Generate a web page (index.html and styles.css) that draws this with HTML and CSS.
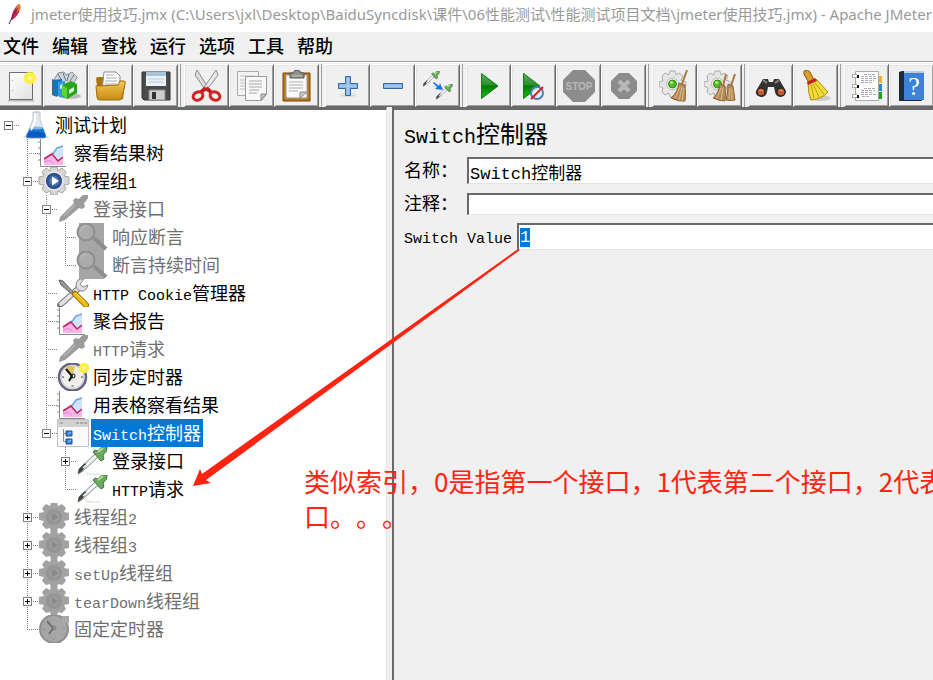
FILE: index.html
```html
<!DOCTYPE html>
<html lang="zh-CN">
<head>
  <meta charset="UTF-8">
  <meta name="viewport" content="width=device-width, initial-scale=1.0">
  <title>jmeter使用技巧.jmx - Apache JMeter</title>
  <link rel="stylesheet" href="styles.css">
</head>
<body>

<!-- tree icons -->
<svg class="defs" aria-hidden="true">
  <defs>
    <linearGradient id="gold" x1="0" y1="0" x2="0" y2="1"><stop offset="0" stop-color="#f3c75a"/><stop offset="1" stop-color="#c98a10"/></linearGradient>
    <linearGradient id="green" x1="0" y1="0" x2="0" y2="1"><stop offset="0" stop-color="#5fae5f"/><stop offset=".45" stop-color="#2a8f2a"/><stop offset=".5" stop-color="#067806"/><stop offset="1" stop-color="#12c512"/></linearGradient>
    <linearGradient id="paper" x1="0" y1="0" x2="1" y2="1"><stop offset="0" stop-color="#fff"/><stop offset="1" stop-color="#e0e0e0"/></linearGradient>
    <radialGradient id="sun"><stop offset="0" stop-color="#fffde0"/><stop offset=".4" stop-color="#fff04a"/><stop offset=".75" stop-color="#fdf03a"/><stop offset="1" stop-color="#fdf03a" stop-opacity="0"/></radialGradient>
    <radialGradient id="blue"><stop offset="0" stop-color="#9dbbe6"/><stop offset=".6" stop-color="#3d66a8"/><stop offset="1" stop-color="#1d3d78"/></radialGradient>
  </defs>
  <symbol id="flask" viewBox="0 0 32 28">
    <ellipse cx="17" cy="26" rx="13" ry="2" fill="#ddd"/>
    <path d="M14 1h7v8l6 16q0 2-2 2H9q-2 0-2-2l7-16z" fill="#e3e9ef" stroke="#bcc6d0"/>
    <path d="M11 17h13l3 8q0 2-2 2H9q-2 0-2-2z" fill="#1c78d8"/>
    <path d="M9 22q8-4 17 1v3H8z" fill="#0b5bc0"/>
    <ellipse cx="17.500" cy="17" rx="6.500" ry="1.500" fill="#7db8ee"/>
    <path d="M16 3v7l-4 9" stroke="#fff" stroke-width="2" fill="none"/>
    <path d="M18 0v2" stroke="#bbb"/>
  </symbol>
  <symbol id="chart" viewBox="0 0 32 28">
    <path d="M6 26V19l8-6 5 6 6-4v11z" fill="#fbb4e6"/>
    <path d="M14 16l5-7q3-1 6-2v11l-5 3z" fill="#cfe4fb"/>
    <path d="M14 16l5-7q3-1 6-2" stroke="#6fa6e8" stroke-width="1.500" fill="none"/>
    <path d="M6 20l8-5 6 7 5-4" stroke="#b8265e" stroke-width="1.500" fill="none"/>
    <path d="M6 23q6-3 9 1" stroke="#e080e0" fill="none"/>
    <path d="M2.500 0v27.500H28M0 3h2M0 9h2M0 15h2M0 21h2" stroke="#888" fill="none"/>
  </symbol>
  <symbol id="gear" viewBox="0 0 32 28">
    <path d="M13 0h6l1 4 4-3 4 4-2 4 5 1v7l-5 1 2 4-4 4-4-2-1 4h-6l-1-4-4 2-4-4 2-4-5-1v-7l5-1-2-4 4-4 4 3z" fill="#d6d6d6" stroke="#a6a6a6"/>
    <circle cx="16" cy="14" r="10" fill="#e4e4e4"/>
    <circle cx="16" cy="14" r="8" fill="url(#blue)"/>
    <path d="M14 9.500v9l7-4.500z" fill="#fff"/>
  </symbol>
  <symbol id="gear-off" viewBox="0 0 32 28">
    <path d="M13 -1h6l1 4 4-2 4 4-2 4 5 1v7l-5 1 2 4-4 4-4-1-1 4h-6l-1-4-4 1-4-4 2-4-5-1v-7l5-1-2-4 4-4 4 2z" fill="#a2a2a2"/>
    <circle cx="16" cy="14" r="8" fill="#949494"/>
    <circle cx="16" cy="14" r="5" fill="#9c9c9c"/>
    <path d="M14 10v8l6-4z" fill="#898989"/>
  </symbol>
  <symbol id="dropper" viewBox="0 0 32 28">
    <path d="M10 26q8 3 14 1" stroke="#e6e6e6" fill="none" stroke-width="2"/>
    <path d="M3 22L19 7l3 3L7 24l-5 3z" fill="#e9eeee" stroke="#888"/>
    <path d="M2 27l1-5 6-6 2 2-5 6z" fill="#3c4242"/>
    <path d="M7 21L19 10" stroke="#fff" stroke-width="1.500"/>
    <path d="M17 5l2-2 3 1q4-6 9-4 1 4-4 8l1 4-3 2z" fill="#6cab5a" stroke="#3c7a3a"/>
    <path d="M22 5l5-4" stroke="#b5dba8" stroke-width="2"/>
  </symbol>
  <symbol id="dropper-off" viewBox="0 0 32 28">
    <path d="M2 27l1-5L17 8l-1-3 3-2 3 1q4-6 9-4 1 4-4 8l1 4-3 2-3-1L8 25z" fill="#9b9b9b"/>
    <path d="M7 21L18 10" stroke="#b0b0b0" stroke-width="2"/>
  </symbol>
  <symbol id="lens-off" viewBox="0 0 32 28">
    <path d="M3 0h25v28H3z" fill="#a6a6a6"/>
    <path d="M18 15L30 26" stroke="#8d8d8d" stroke-width="4"/>
    <circle cx="10" cy="9" r="8.500" fill="#ababab" stroke="#8e8e8e" stroke-width="2"/>
    <path d="M5 8q1-5 6-5" stroke="#b8b8b8" stroke-width="2" fill="none"/>
  </symbol>
  <symbol id="tools" viewBox="0 0 32 28">
    <path d="M3 26L22 9" stroke="#777" stroke-width="6" stroke-linecap="round"/>
    <path d="M4 25L22 9" stroke="#e2e2e2" stroke-width="4" stroke-linecap="round"/>
    <path d="M27 0q-8-1-8 6 0 5 5 6 5 1 7-6l-5 2-3-3z" fill="#dedede" stroke="#888"/>
    <path d="M2 1l4 1 12 13-2 1L4 6z" fill="#999" stroke="#666"/>
    <path d="M18 15L29 26" stroke="#8b6a00" stroke-width="6" stroke-linecap="round"/>
    <path d="M18 15L29 26" stroke="#f2b90e" stroke-width="4" stroke-linecap="round"/>
    <path d="M19 14l9 9" stroke="#ffe27a"/>
  </symbol>
  <symbol id="clock" viewBox="0 0 32 28">
    <circle cx="15.500" cy="14" r="13.500" fill="#f0efe8" stroke="#65657f" stroke-width="2.500"/>
    <circle cx="15.500" cy="14" r="11.500" fill="none" stroke="#c9c9dc"/>
    <path d="M15 13L9 4q5-2 9 0z" fill="#e2c54c"/>
    <path d="M9 6l6 7-3 5" stroke="#111" stroke-width="2" fill="none"/>
    <path d="M15.500 22v2M5 14h2M24 14h2" stroke="#999" stroke-width="2"/>
    <circle cx="16" cy="13" r="2" fill="none" stroke="#111"/>
    <circle cx="27" cy="5" r="6" fill="url(#sun)"/>
  </symbol>
  <symbol id="clock-off" viewBox="0 0 32 28">
    <circle cx="16" cy="14" r="14" fill="#a6a6a6" stroke="#8d8d8d" stroke-width="2"/>
    <path d="M24 1h7v7h-7z" fill="#a9a9a9"/>
    <path d="M9 6l6 7-4 6" stroke="#6f6f6f" stroke-width="2" fill="none"/>
    <circle cx="16" cy="13" r="2" fill="none" stroke="#777"/>
    <path d="M16 23v2M5 14h2M25 14h2" stroke="#888"/>
  </symbol>
  <symbol id="window" viewBox="0 0 32 28">
    <path d="M.500 .500h31v27H.500z" fill="#fafafa" stroke="#c2c2c2"/>
    <path d="M1 1h30v7H1z" fill="#d2d2d2"/>
    <path d="M3 4h3M19 4h3M23 4h3M27 4h3" stroke="#aaa" stroke-width="2"/>
    <path d="M6.500 10v12.500H10M6.500 14.500H10" stroke="#8a8a8a" fill="none"/>
    <path d="M9 12h6v5H9zM9 20h6v5H9z" fill="#2b80dc" stroke="#1558a8"/>
    <path d="M11 15l3-2M11 23l3-2" stroke="#b9dcff"/>
  </symbol>
  <symbol id="cog" viewBox="0 0 32 32">
    <path d="M11 1h5l1 4 3-2 4 3-2 4 5 2v4l-5 1 2 5-4 3-3-2-1 4h-5l-1-4-4 2-3-3 1-4-4-2v-4l4-1-1-5 3-3 4 2z" fill="#e6e6e6" stroke="#adadad"/>
    <circle cx="13.500" cy="14" r="6" fill="#f5f5f5" stroke="#b8b8b8"/>
    <circle cx="13.500" cy="14" r="4" fill="#52bd22" stroke="#2d8b12"/>
    <circle cx="12.500" cy="12.500" r="1.500" fill="#b4ee8a"/>
  </symbol>
</svg>

<div class="window">
  <header class="titlebar">
    <svg class="feather" viewBox="0 0 14 22" aria-hidden="true">
      <path d="M3 17Q4 6 11 1q2 2 1 6-2 6-8 10z" fill="#c92545"/>
      <path d="M8 5q3-4 4-4 1 3 0 6l-3 2z" fill="#ef7d26"/>
      <path d="M1 21q3-8 9-16" stroke="#5d2265" fill="none"/>
    </svg>
    <span>jmeter使用技巧.jmx (C:\Users\jxl\Desktop\BaiduSyncdisk\课件\06性能测试\性能测试项目文档\jmeter使用技巧.jmx) - Apache JMeter</span>
  </header>

  <nav class="menubar">
    <button>文件</button>
    <button>编辑</button>
    <button>查找</button>
    <button>运行</button>
    <button>选项</button>
    <button>工具</button>
    <button>帮助</button>
  </nav>

  <div class="toolbar">
    <div class="tools">
      <button aria-label="新建"><svg viewBox="0 0 32 32">
        <path d="M3 30.500h26" stroke="#bbb" stroke-width="2"/>
        <path d="M4.500 2.500h23v27h-23z" fill="url(#paper)" stroke="#6b6b6b"/>
        <path d="M7.500 10v1M7.500 20v1" stroke="#999"/>
        <circle cx="25" cy="8" r="7" fill="url(#sun)"/></svg></button>
      <button aria-label="模板"><svg viewBox="0 0 32 32">
        <ellipse cx="20" cy="26" rx="11" ry="3" fill="#bbb"/>
        <path d="M4 10l4-7 6-1 2 3 6-3 5 5-3 6-13 4z" fill="#cfd6da" stroke="#87949b"/>
        <path d="M8 4l4 7M13 3l3 8M19 4l-2 7M24 5l-4 6" stroke="#66767e"/>
        <path d="M2 9l5 2v16l-5-2z" fill="#4d6170"/>
        <path d="M3 10l9-1v18l-9-2z" fill="#1674bd"/>
        <path d="M8 12l7-1v17l-7-2z" fill="#2f9be6"/>
        <path d="M10 15l3-1v4l-3 1z" fill="#d7eefc"/>
        <path d="M12 15l9-4 6 3v9l-10 6-5-4z" fill="#27a51b"/>
        <path d="M12 15l5 3v11l-5-4z" fill="#5fd13b"/>
        <path d="M19 20l5-3v4l-5 3z" fill="#d8f7c9"/></svg></button>
      <button aria-label="打开"><svg viewBox="0 0 32 32">
        <path d="M1 9q0-2 2-2h6l2 4h17q2 0 2 2l-2 16H4z" fill="#a8740f"/>
        <path d="M9 2h12l4 4v15H7z" fill="#fff" stroke="#8b8b8b"/>
        <path d="M11 5h8M11 8h11M10 11h12M10 14h12" stroke="#aaa"/>
        <path d="M1 16l22-1 2-4h4q2 0 1 3l-3 14q0 2-3 2H5q-3 0-3-3z" fill="url(#gold)" stroke="#9c6b0c"/></svg></button>
      <button aria-label="保存"><svg viewBox="0 0 32 32">
        <path d="M2 2h28v28H4l-2-2z" fill="#4b4b4b" stroke="#333"/>
        <path d="M6 2h20v14H6z" fill="#eaf2f8"/>
        <path d="M6 2h20v4H6z" fill="#a9c3d6"/>
        <path d="M8 9h16M8 12h16" stroke="#b9c9d4"/>
        <path d="M9 20h16v10H9z" fill="#cfcfcf" stroke="#888"/>
        <path d="M12 22h4v7h-4z" fill="#333"/></svg></button>
    </div>
    <div class="tools">
      <button aria-label="剪切"><svg viewBox="0 0 32 32">
        <path d="M6 0l12 19-3 2L4 5z" fill="#ddd" stroke="#8b8b8b"/>
        <path d="M25 0L12 19l3 2L27 5z" fill="#e8e8e8" stroke="#8b8b8b"/>
        <path d="M15 18l5 4M15 18l-5 4" stroke="#c51d1d" stroke-width="4"/>
        <ellipse cx="7" cy="26" rx="5" ry="4" fill="none" stroke="#d42222" stroke-width="3" transform="rotate(-25 7 26)"/>
        <ellipse cx="24" cy="26" rx="5" ry="4" fill="none" stroke="#d42222" stroke-width="3" transform="rotate(25 24 26)"/></svg></button>
      <button aria-label="复制"><svg viewBox="0 0 32 32">
        <path d="M1.500 1.500h21v24h-21z" fill="#f3f3f3" stroke="#aaa"/>
        <path d="M4 6h14M4 10h6M4 13h6M4 16h6M4 19h6" stroke="#c2c2c2"/>
        <path d="M9.500 6.500h21v18l-5 6h-16z" fill="#f8f8f8" stroke="#999"/>
        <path d="M13 11h13M13 14h13M13 17h13M13 20h10M13 23h8" stroke="#aaa"/>
        <path d="M25 30v-6h5z" fill="#ccc" stroke="#888"/></svg></button>
      <button aria-label="粘贴"><svg viewBox="0 0 32 32">
        <path d="M2 3h27v28H2z" fill="#b97816" stroke="#75480a"/>
        <path d="M5 5h21v23H5z" fill="#fafafa" stroke="#999"/>
        <path d="M8 12h14M8 15h14M8 18h14M8 21h9" stroke="#aaa"/>
        <path d="M19 28v-6h7z" fill="#ccc" stroke="#888"/>
        <path d="M9 3h3q1-3 4-3t4 3h3v5H9z" fill="#8e9188" stroke="#55574f"/>
        <path d="M11 6h10" stroke="#c8cac4"/></svg></button>
    </div>
    <div class="tools">
      <button aria-label="展开"><svg viewBox="0 0 32 32">
        <ellipse cx="16" cy="25" rx="9" ry="2" fill="#ddd"/>
        <path d="M13.500 6.500h5v7h7v5h-7v7h-5v-7h-7v-5h7z" fill="#8fb8e2" stroke="#3465a4"/>
        <path d="M16 8v16M8 16h16" stroke="#b5d2f0"/></svg></button>
      <button aria-label="折叠"><svg viewBox="0 0 32 32">
        <path d="M6.500 13.500h19v5h-19z" fill="#8fb8e2" stroke="#3465a4"/>
        <path d="M8 16h16" stroke="#b5d2f0"/></svg></button>
      <button aria-label="切换"><svg viewBox="0 0 32 32">
        <use href="#dropper" width="18" height="16" y="1"/>
        <use href="#dropper" width="18" height="16" x="13" y="14"/>
        <path d="M12 12l5 4 1-3 3 7-8-1 2-2-4-4z" fill="#1d74e8"/></svg></button>
    </div>
    <div class="tools">
      <button aria-label="启动"><svg viewBox="0 0 32 32"><path d="M8.500 3.500L25 16 8.500 28.500z" fill="url(#green)" stroke="#117a11"/></svg></button>
      <button aria-label="不停顿启动"><svg viewBox="0 0 32 32"><path d="M5.500 3.500L22 16 5.500 28.500z" fill="url(#green)" stroke="#117a11"/>
        <circle cx="19" cy="23" r="6" fill="#eef3fa" fill-opacity=".8" stroke="#4a7fbf" stroke-width="2"/>
        <path d="M13 29L25 17" stroke="#dc1f1f" stroke-width="2"/></svg></button>
      <button aria-label="停止" disabled><svg viewBox="0 0 32 32"><path d="M10 0h12l10 10v12L22 32H10L0 22V10z" fill="#8c8c8c"/>
        <text class="stop-text" x="16" y="20" text-anchor="middle">STOP</text></svg></button>
      <button aria-label="关闭" disabled><svg viewBox="0 0 32 32"><path d="M11 3h10l8 8v10l-8 8H11l-8-8V11z" fill="#8c8c8c"/>
        <path d="M11 11l10 10M21 11L11 21" stroke="#b9b9b9" stroke-width="4"/></svg></button>
    </div>
    <div class="tools">
      <button aria-label="清除"><svg viewBox="0 0 32 32"><use href="#cog" width="32" height="32"/>
        <path d="M28 0L23 14" stroke="#a97840" stroke-width="2"/>
        <path d="M20 13l6 2q1 9 0 16-6 1-14-3 7-6 8-15z" fill="#b98d5b" stroke="#8a6236"/>
        <path d="M21 17l-5 11M23 17l-3 13M25 18l-2 13" stroke="#dcb988"/></svg></button>
      <button aria-label="清除全部"><svg viewBox="0 0 32 32"><use href="#cog" width="32" height="32"/>
        <path d="M22 4l-3 12M31 4l-4 12" stroke="#a97840" stroke-width="2"/>
        <path d="M16 14l5 2q1 8 0 15-6 0-12-3 6-5 7-14z" fill="#b98d5b" stroke="#8a6236"/>
        <path d="M24 14l5 2q1 8 2 14-5 1-9 0 2-6 2-16z" fill="#b98d5b" stroke="#8a6236"/>
        <path d="M17 18l-4 10M19 18l-2 12M26 18l-1 11M28 19v11" stroke="#dcb988"/></svg></button>
    </div>
    <div class="tools">
      <button aria-label="查找"><svg viewBox="0 0 32 32">
        <path d="M8 9h5l1 3h4l1-3h5l7 12q0 5-5 6-5 0-6-5l-1-5h-6l-1 5q-1 5-6 5-6-1-5-6z" fill="#333"/>
        <path d="M8 10l4 3M24 10l-4 3" stroke="#888" stroke-width="2"/>
        <circle cx="6" cy="22" r="4" fill="#c05a28" stroke="#222"/>
        <circle cx="26" cy="22" r="4" fill="#c05a28" stroke="#222"/>
        <path d="M4 21q2-2 4 0M24 21q2-2 4 0" stroke="#eba078" fill="none"/></svg></button>
      <button aria-label="重置搜索"><svg viewBox="0 0 32 32">
        <ellipse cx="20" cy="28" rx="11" ry="3" fill="#ccc"/>
        <path d="M4 1q4-2 6 1l4 8-5 3-5-9z" fill="#d9a028" stroke="#85570e"/>
        <path d="M8 13l8-4 12 13q-6 7-17 8-3-7-3-17z" fill="#f2dc3a" stroke="#a88c10"/>
        <path d="M11 15l3 13M13 14l6 13M15 13l9 11" stroke="#b89b18"/>
        <path d="M7 12l8-4 2 3-9 4z" fill="#c52424"/></svg></button>
    </div>
    <div class="tools">
      <button aria-label="函数助手"><svg viewBox="0 0 32 32">
        <path d="M27 6h4v7h-4z" fill="#f3b51d"/><path d="M27 14h4v7h-4z" fill="#2882f0"/><path d="M27 22h4v7h-4z" fill="#18a51c"/>
        <path d="M4.500 1.500h23v29h-23z" fill="#fff" stroke="#aaa"/>
        <path d="M13 4.500h12M10 6.500h14M10 8.500h15M10 10.500h13M10 12.500h11M13 18.500h11M10 20.500h14M10 22.500h12M10 24.500h15M11 26.500h8" stroke="#8587a0" stroke-width=".7" stroke-dasharray="3 1"/>
        <path d="M1 6h5M1 16h5M1 26h5" stroke="#aaa" stroke-width="4"/><path d="M2 6h4M2 16h4M2 26h4" stroke="#fff" stroke-width="2"/>
        <path d="M7 5v3M7 15v3M7 25v3" stroke="#111" stroke-width="2"/></svg></button>
      <button aria-label="帮助"><svg viewBox="0 0 32 32">
        <path d="M3 2l3-1h22v28l-3 2H3z" fill="#202b38"/>
        <path d="M8 3h20v27H8z" fill="#3d82d8"/><path d="M8 2h20" stroke="#bcd" stroke-width="2"/>
        <text class="help-text" x="18" y="25" text-anchor="middle">?</text></svg></button>
    </div>
  </div>

  <main class="workspace">
    <ul class="tree">
      <li>
        <div class="row"><button class="handle minus" aria-label="折叠"></button><svg><use href="#flask"/></svg><span class="name">测试计划</span></div>
        <ul>
          <li><div class="row"><i class="branch"></i><svg><use href="#chart"/></svg><span class="name">察看结果树</span></div></li>
          <li>
            <div class="row"><button class="handle minus" aria-label="折叠"></button><svg><use href="#gear"/></svg><span class="name">线程组<b>1</b></span></div>
            <ul>
              <li>
                <div class="row off"><button class="handle minus" aria-label="折叠"></button><svg><use href="#dropper-off"/></svg><span class="name">登录接口</span></div>
                <ul>
                  <li><div class="row off"><i class="branch"></i><svg><use href="#lens-off"/></svg><span class="name">响应断言</span></div></li>
                  <li><div class="row off"><i class="branch"></i><svg><use href="#lens-off"/></svg><span class="name">断言持续时间</span></div></li>
                </ul>
              </li>
              <li><div class="row"><i class="branch"></i><svg><use href="#tools"/></svg><span class="name"><b>HTTP Cookie</b>管理器</span></div></li>
              <li><div class="row"><i class="branch"></i><svg><use href="#chart"/></svg><span class="name">聚合报告</span></div></li>
              <li><div class="row off"><i class="branch"></i><svg><use href="#dropper-off"/></svg><span class="name"><b>HTTP</b>请求</span></div></li>
              <li><div class="row"><i class="branch"></i><svg><use href="#clock"/></svg><span class="name">同步定时器</span></div></li>
              <li><div class="row"><i class="branch"></i><svg><use href="#chart"/></svg><span class="name">用表格察看结果</span></div></li>
              <li>
                <div class="row selected"><button class="handle minus" aria-label="折叠"></button><svg><use href="#window"/></svg><span class="name"><b>Switch</b>控制器</span></div>
                <ul>
                  <li><div class="row"><button class="handle plus" aria-label="展开"></button><svg><use href="#dropper"/></svg><span class="name">登录接口</span></div></li>
                  <li><div class="row"><i class="branch"></i><svg><use href="#dropper"/></svg><span class="name"><b>HTTP</b>请求</span></div></li>
                </ul>
              </li>
            </ul>
          </li>
          <li><div class="row off"><button class="handle plus" aria-label="展开"></button><svg><use href="#gear-off"/></svg><span class="name">线程组<b>2</b></span></div></li>
          <li><div class="row off"><button class="handle plus" aria-label="展开"></button><svg><use href="#gear-off"/></svg><span class="name">线程组<b>3</b></span></div></li>
          <li><div class="row off"><button class="handle plus" aria-label="展开"></button><svg><use href="#gear-off"/></svg><span class="name"><b>setUp</b>线程组</span></div></li>
          <li><div class="row off"><button class="handle plus" aria-label="展开"></button><svg><use href="#gear-off"/></svg><span class="name"><b>tearDown</b>线程组</span></div></li>
          <li><div class="row off"><i class="branch"></i><svg><use href="#clock-off"/></svg><span class="name">固定定时器</span></div></li>
        </ul>
      </li>
    </ul>

    <section class="panel">
      <h1><b>Switch</b>控制器</h1>
      <div class="field">
        <label class="wide" for="name">名称：</label>
        <input type="text" id="name" value="Switch控制器">
      </div>
      <div class="field">
        <label class="wide" for="comment">注释：</label>
        <input type="text" id="comment" class="short">
      </div>
      <div class="field">
        <label for="switchValue"><b>Switch Value</b></label>
        <input type="text" id="switchValue" value="1">
      </div>
    </section>
  </main>

  <svg class="arrow" viewBox="0 0 330 240" aria-hidden="true">
    <path d="M325 1L9 226l-2-5-7 17 18-3-5-3L327 2z" fill="#ff2412"/>
  </svg>
  <div class="note">
    <p>类似索引，0是指第一个接口，1代表第二个接口，2代表</p>
    <p>口。。。</p>
  </div>
</div>

<script>
  // start with the switch value selected, ready to be typed over
  let field = document.getElementById("switchValue");
  field.focus();
  field.select();
</script>

</body>
</html>
```
FILE: styles.css
```css
* {
  box-sizing: border-box;
}
body {
  margin: 0;
  background: #f0f0f0;
  color: #000;
  font-family: "Noto Sans CJK SC", sans-serif;
}
button {
  padding: 0;
  border: none;
  background: none;
  font-family: inherit;
  color: inherit;
}
ul {
  list-style: none;
  margin: 0;
  padding: 0;
}
/* latin runs, half as wide as the chinese characters */
b {
  font-family: "Liberation Mono", monospace;
  font-weight: normal;
  font-size: 15px;
  line-height: 1;
}
.defs {
  position: absolute;
  width: 0;
  height: 0;
}
.window {
  position: relative;
  display: flex;
  flex-direction: column;
  height: 100vh;
  overflow: hidden;
}

/* title and menu */
.titlebar {
  display: flex;
  align-items: center;
  gap: 9px;
  height: 32px;
  padding: 0 0 5px 8px;
  flex: none;
  background: #fff;
  color: #999;
  font-family: "Noto Sans", "Noto Sans CJK SC", sans-serif;
  font-size: 15px;
  white-space: nowrap;
}
.feather {
  width: 14px;
  height: 22px;
  flex: none;
}
.menubar {
  display: flex;
  align-items: flex-start;
  gap: 13px;
  height: 30px;
  padding-left: 3px;
  flex: none;
  border-bottom: 1px solid #a0a0a0;
}
.menubar button {
  font-size: 18px;
  font-weight: 500;
  line-height: 27px;
}

/* toolbar */
.toolbar {
  display: flex;
  flex: none;
  height: 45px;
  margin-left: -2px;
  padding-top: 1px;
  border-top: 1px solid #fff;
}
.tools {
  display: flex;
}
.tools + .tools {
  margin-left: 2px;
  padding-left: 3px;
  border-left: 1px solid #a0a0a0;
}
.tools button {
  display: flex;
  align-items: center;
  justify-content: center;
  width: 45px;
  height: 43px;
  border: 1px solid #fff;
  border-right: 1px solid #696969;
  border-bottom: 1px solid #696969;
  box-shadow: inset 1px 1px #e3e3e3, inset -1px -1px #a0a0a0;
}
.tools svg {
  width: 32px;
  height: 32px;
}
.stop-text {
  font: bold 10px "Liberation Sans", sans-serif;
  fill: #b9b9b9;
}
.help-text {
  font: 26px "Liberation Serif", serif;
  fill: #fff;
}

/* tree on the left */
.workspace {
  display: flex;
  flex: 1;
  min-height: 0;
}
.tree {
  width: 387px;
  flex: none;
  padding-top: 1px;
  overflow: hidden;
  background: #fff;
  border-top: 3px solid #696969;
  border-right: 1px solid #e3e3e3;
}
.tree ul {
  margin-left: 19px;
}
.tree ul li {
  background: repeating-linear-gradient(to bottom, #808080 0 1px, transparent 1px 2px) 8px 0 / 1px 100% no-repeat;
}
.tree ul li:last-child {
  background-size: 1px 14px;
}
.row {
  display: flex;
  align-items: center;
  height: 28px;
  background: repeating-linear-gradient(to right, #808080 0 1px, transparent 1px 2px) 8px 14px / 11px 1px no-repeat;
}
.row svg {
  width: 32px;
  height: 28px;
  flex: none;
  margin-right: 2px;
}
.branch {
  width: 19px;
}
.handle {
  width: 9px;
  height: 9px;
  margin: 0 6px 0 4px;
  flex: none;
  border: 1px solid #808080;
  background: linear-gradient(#000, #000) center / 5px 1px no-repeat #fff;
}
.handle.plus {
  background: linear-gradient(#000, #000) center / 5px 1px no-repeat,
    linear-gradient(#000, #000) center / 1px 5px no-repeat #fff;
}
.name {
  height: 28px;
  padding: 0 2px;
  font-size: 18px;
  line-height: 26px;
  white-space: nowrap;
}
.off .name {
  color: #707070;
}
.selected .name {
  background: #0078d7;
  color: #fff;
}

/* controller form */
.panel {
  flex: 1;
  min-width: 0;
  margin-left: 5px;
  padding: 7px 0 0 10px;
  border-top: 3px solid #696969;
  border-left: 2px solid #696969;
}
.panel h1 {
  margin: 0 0 8px;
  font-size: 24px;
  font-weight: normal;
  line-height: 32px;
}
.panel h1 b {
  font-size: 20px;
}
.field {
  display: flex;
  align-items: center;
  height: 27px;
  margin-bottom: 6px;
  font-size: 18px;
}
.field label {
  width: 113px;
  flex: none;
  padding-bottom: 3px;
  line-height: 24px;
}
.field .wide {
  width: 63px;
}
.field input {
  flex: 1;
  min-width: 0;
  height: 27px;
  padding: 0 1px;
  border: 2px solid #696969;
  border-right: none;
  border-bottom: 1px solid #e3e3e3;
  background: #fff;
  color: #000;
  font-family: "Liberation Mono", "Noto Sans CJK SC", monospace;
  font-size: 17px;
  outline: none;
}
.field .short {
  height: 22px;
}
.field input::selection {
  background: #0078d7;
  color: #fff;
}

/* notes drawn over the window */
.arrow {
  position: absolute;
  left: 193px;
  top: 248px;
  width: 330px;
  height: 240px;
}
.note {
  position: absolute;
  left: 304px;
  top: 463px;
  right: 0;
  overflow: hidden;
  color: #ff2412;
  font-size: 26px;
  line-height: 35px;
  white-space: nowrap;
  text-spacing-trim: space-all;
}
.note p {
  margin: 0;
}
```
